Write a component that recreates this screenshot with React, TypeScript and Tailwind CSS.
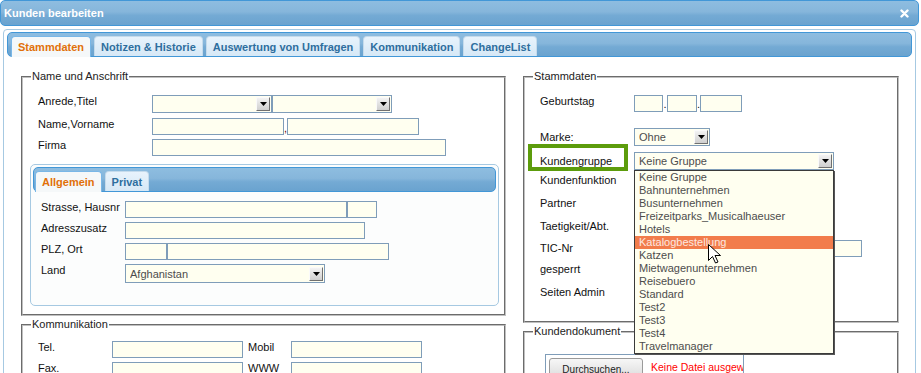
import React from 'react';

const gruppen = [
  'Keine Gruppe',
  'Bahnunternehmen',
  'Busunternehmen',
  'Freizeitparks_Musicalhaeuser',
  'Hotels',
  'Katalogbestellung',
  'Katzen',
  'Mietwagenunternehmen',
  'Reisebuero',
  'Standard',
  'Test2',
  'Test3',
  'Test4',
  'Travelmanager',
];

function Field({ className = '' }: { className?: string }) {
  return <div className={`h-[17px] shrink-0 border border-[#7f9db9] bg-[#fffff0] ${className}`} />;
}

function Select({ className = '', value = '' }: { className?: string; value?: string }) {
  return (
    <div className={`flex h-[18px] shrink-0 items-center border border-[#7f9db9] bg-[#fffff0] pl-[4px] text-[#4d4d4d] ${className}`}>
      <span className="truncate leading-[14px]">{value}</span>
      <span className="ml-auto mr-[1px] flex h-[14px] w-[14px] items-center justify-center border border-t-[#fafafa] border-l-[#fafafa] border-r-[#707070] border-b-[#707070] bg-gradient-to-b from-[#f3f3f3] to-[#cfcfcf]">
        <svg width="7" height="6" viewBox="0 0 7 6">
          <path d="M0 1h7L3.5 5z" fill="#000" />
        </svg>
      </span>
    </div>
  );
}

function Tab({ label, active = false }: { label: string; active?: boolean }) {
  if (active) {
    return (
      <div className="-mb-px h-[21px] rounded-t-[4px] border border-b-0 border-[#79b7e7] bg-[#f5f8f9] px-[6px] pt-[3px] font-bold leading-[14px] text-[#e17009]">
        {label}
      </div>
    );
  }
  return (
    <div className="h-[20px] rounded-t-[4px] border border-b-0 border-[#c5dbec] bg-gradient-to-b from-[#e8f3fc] to-[#d6e8f6] px-[6px] pt-[3px] font-bold leading-[14px] text-[#2e6e9e]">
      {label}
    </div>
  );
}

function Header({ children, className = '' }: { children: React.ReactNode; className?: string }) {
  return (
    <div
      className={`flex h-[25px] items-end gap-[3px] rounded-[5px] border border-[#4297d7] bg-[linear-gradient(to_bottom,#8ebde0_0%,#86b6db_45%,#74aad4_60%,#6aa3cf_100%)] ${className}`}
    >
      {children}
    </div>
  );
}

const fieldsetCls = 'border-2 border-[#c0c0c0] [border-style:groove]';

export default function App() {
  return (
    <div className="relative h-[373px] w-[921px] overflow-hidden bg-white font-['Liberation_Sans',Arial,sans-serif] text-[11px] text-[#111]">
      {/* Dialog title */}
      <div className="flex h-[26px] w-[919px] items-center justify-between rounded-[5px] border border-[#4297d7] bg-[linear-gradient(to_bottom,#8ebde0_0%,#86b6db_45%,#74aad4_60%,#6aa3cf_100%)] pl-[3px] pr-[9px]">
        <span className="font-bold text-white">Kunden bearbeiten</span>
        <svg width="9" height="9" viewBox="0 0 9 9">
          <path d="M1.5 1.5l6 6M7.5 1.5l-6 6" stroke="#fff" strokeWidth="2.4" strokeLinecap="round" />
        </svg>
      </div>

      <div className="ml-[3px] mt-[3px] h-[350px] w-[913px] rounded-t-[4px] border border-[#a6c9e2] px-[3px] pt-[2px]">
        <Header className="pl-[3px]">
          <Tab label="Stammdaten" active />
          <Tab label="Notizen & Historie" />
          <Tab label="Auswertung von Umfragen" />
          <Tab label="Kommunikation" />
          <Tab label="ChangeList" />
        </Header>

        <div className="mt-[13px] flex gap-[17px] pl-[14px]">
          {/* left column */}
          <div className="flex w-[485px] flex-col gap-[2px]">
            <fieldset className={`h-[246px] ${fieldsetCls}`}>
              <legend className="ml-[8px] px-[1px] leading-[13px] text-[#222]">Name und Anschrift</legend>
              <div className="flex flex-col pt-[12px]">
                <div className="flex items-start pl-[15px]">
                  <span className="w-[114px] leading-[13px]">Anrede,Titel</span>
                  <Select className="w-[120px]" />
                  <Select className="w-[120px]" />
                </div>
                <div className="mt-[5px] flex items-start pl-[15px]">
                  <span className="w-[114px] leading-[13px]">Name,Vorname</span>
                  <Field className="w-[132px]" />
                  <span className="w-[3px] pt-[4px] text-center leading-[13px] text-[#600]">,</span>
                  <Field className="w-[132px]" />
                </div>
                <div className="mt-[4px] flex items-start pl-[15px]">
                  <span className="w-[114px] leading-[13px]">Firma</span>
                  <Field className="w-[294px]" />
                </div>

                <div className="ml-[7px] mt-[8px] h-[142px] w-[469px] rounded-[5px] border border-[#a6c9e2] bg-[#fcfdfd] p-[2px]">
                  <Header className="pl-[1px]">
                    <Tab label="Allgemein" active />
                    <Tab label="Privat" />
                  </Header>
                  <div className="flex flex-col gap-[4px] pl-[8px] pt-[9px]">
                    <div className="flex items-start">
                      <span className="w-[84px] leading-[13px]">Strasse, Hausnr</span>
                      <Field className="w-[222px]" />
                      <Field className="w-[30px]" />
                    </div>
                    <div className="flex items-start">
                      <span className="w-[84px] leading-[13px]">Adresszusatz</span>
                      <Field className="w-[240px]" />
                    </div>
                    <div className="flex items-start">
                      <span className="w-[84px] leading-[13px]">PLZ, Ort</span>
                      <Field className="w-[42px]" />
                      <Field className="w-[222px]" />
                    </div>
                    <div className="flex items-start">
                      <span className="w-[84px] leading-[13px]">Land</span>
                      <Select className="h-[19px] w-[200px]" value="Afghanistan" />
                    </div>
                  </div>
                </div>
              </div>
            </fieldset>

            <fieldset className={`h-[80px] ${fieldsetCls}`}>
              <legend className="ml-[8px] px-[1px] leading-[13px] text-[#222]">Kommunikation</legend>
              <div className="flex flex-col gap-[4px] pl-[15px] pt-[10px]">
                <div className="flex items-start">
                  <span className="w-[74px] leading-[13px]">Tel.</span>
                  <Field className="w-[131px]" />
                  <span className="ml-[5px] w-[43px] leading-[13px]">Mobil</span>
                  <Field className="w-[131px]" />
                </div>
                <div className="flex items-start">
                  <span className="w-[74px] leading-[13px]">Fax.</span>
                  <Field className="w-[131px]" />
                  <span className="ml-[5px] w-[43px] leading-[13px]">WWW</span>
                  <Field className="w-[131px]" />
                </div>
              </div>
            </fieldset>
          </div>

          {/* right column */}
          <div className="flex w-[376px] flex-col gap-[2px]">
            <fieldset className={`h-[253px] ${fieldsetCls}`}>
              <legend className="ml-[8px] px-[1px] leading-[13px] text-[#222]">Stammdaten</legend>
              <div className="flex flex-col pl-[15px] pt-[12px]">
                <div className="flex items-start">
                  <span className="w-[94px] leading-[13px]">Geburtstag</span>
                  <Field className="w-[29px]" />
                  <span className="w-[4px] pt-[3px] text-center leading-[13px]">.</span>
                  <Field className="w-[30px]" />
                  <span className="w-[3px] pt-[3px] text-center leading-[13px]">.</span>
                  <Field className="w-[42px]" />
                </div>
                <div className="mt-[16px] flex items-center">
                  <span className="w-[94px] leading-[13px]">Marke:</span>
                  <Select className="w-[76px]" value="Ohne" />
                </div>
                <div className="mt-[6px] flex items-center">
                  <span className="relative w-[94px] leading-[13px]">
                    Kundengruppe
                    <span className="absolute left-[-12px] top-[-11px] h-[27px] w-[100px] border-[4px] border-[#5c9c0c]" />
                  </span>
                  <div className="relative">
                    <Select className="w-[200px]" value="Keine Gruppe" />
                    <ul className="absolute left-0 top-full z-10 w-[200px] border border-[#3a3a3a] bg-[#fffff0] text-[#4d4d4d] shadow-[1px_1px_0_#555]">
                      {gruppen.map((g) => (
                        <li
                          key={g}
                          className={`h-[13px] whitespace-nowrap pl-[4px] leading-[13px] ${g === 'Katalogbestellung' ? 'bg-[#f27c4b] text-[#fde8e0]' : ''}`}
                        >
                          {g}
                        </li>
                      ))}
                    </ul>
                  </div>
                </div>
                <div className="mt-[1px] flex h-[18px] items-center">
                  <span className="w-[94px]">Kundenfunktion</span>
                  <Select className="w-[150px]" />
                </div>
                <div className="mt-[5px] flex h-[18px] items-center">
                  <span className="w-[94px]">Partner</span>
                  <Select className="w-[150px]" />
                </div>
                <div className="mt-[5px] flex h-[18px] items-center">
                  <span className="w-[94px]">Taetigkeit/Abt.</span>
                  <Field className="w-[180px]" />
                </div>
                <div className="mt-[4px] flex h-[18px] items-center">
                  <span className="w-[94px]">TIC-Nr</span>
                  <Field className="w-[228px]" />
                </div>
                <div className="mt-[3px] flex h-[18px] items-center">
                  <span className="w-[94px]">gesperrt</span>
                </div>
                <div className="mt-[5px] flex h-[18px] items-center">
                  <span className="w-[94px]">Seiten Admin</span>
                </div>
              </div>
            </fieldset>

            <fieldset className={`h-[80px] ${fieldsetCls}`}>
              <legend className="ml-[8px] px-[1px] leading-[13px] text-[#222]">Kundendokument</legend>
              <div className="pl-[20px] pt-[16px]">
                <div className="flex h-[30px] w-[199px] items-start overflow-hidden border border-[#7f9db9] p-[3px]">
                  <button className="h-[22px] w-[94px] shrink-0 rounded-[3px] border border-[#9a9a9a] bg-gradient-to-b from-[#f7f7f7] to-[#dadada] text-[10px] text-[#222]">
                    Durchsuchen...
                  </button>
                  <span className="ml-[8px] whitespace-nowrap pt-[3px] text-[10.5px] leading-[13px] text-[#f00]">
                    Keine Datei ausgewählt.
                  </span>
                </div>
              </div>
            </fieldset>
          </div>
        </div>
      </div>

      {/* mouse pointer over the open list */}
      <svg className="absolute left-[708px] top-[244px] z-20" width="13" height="20" viewBox="0 0 13 20">
        <path d="M0.5 0.5v16l4-4 3 6.5 2.5-1-3-6.5h5.5z" fill="#fff" stroke="#000" strokeWidth="1" strokeLinejoin="round" />
      </svg>
    </div>
  );
}
